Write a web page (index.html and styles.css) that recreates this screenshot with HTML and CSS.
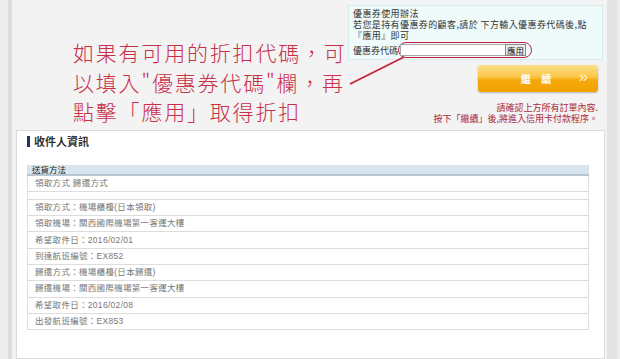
FILE: index.html
```html
<!DOCTYPE html>
<html lang="zh-Hant">
<head>
    <meta charset="UTF-8">
    <meta name="viewport" content="width=device-width, initial-scale=1.0">
    <title>收件人資訊</title>
    <link rel="stylesheet" href="styles.css">
</head>
<body>
    <div class="page">
        <div class="top">
            <div class="note-annotation">
                <div>如果有可用的折扣代碼，可</div>
                <div>以填入"優惠券代碼"欄，再</div>
                <div>點擊「應用」取得折扣</div>
            </div>

            <svg class="pointer-line" width="70" height="40" viewBox="0 0 70 40">
                <path d="M2 32 L56 5" stroke="#c4203c" stroke-width="1.6" fill="none"/>
            </svg>

            <div class="side">
                <div class="coupon-box">
                    <div>優惠券使用辦法</div>
                    <div>若您是持有優惠券的顧客,請於 下方輸入優惠券代碼後,點<br>『應用』即可</div>
                    <div class="coupon-row">
                        <span>優惠券代碼</span>
                        <span class="coupon-mark">
                            <input type="text" class="coupon-input">
                            <button class="coupon-apply">應用</button>
                        </span>
                    </div>
                </div>

                <button class="continue-button">
                    <span class="continue-label">繼 續</span>
                    <span class="continue-arrow">»</span>
                </button>

                <div class="confirm-note">
                    <div>請確認上方所有訂單內容.</div>
                    <div>按下「繼續」後,將進入信用卡付款程序。</div>
                </div>
            </div>
        </div>

        <div class="panel">
            <h2 class="panel-title">收件人資訊</h2>

            <table class="info-table">
                <tr><th>送貨方法</th></tr>
                <tr><td>領取方式 歸還方式</td></tr>
                <tr class="spacer-row"><td></td></tr>
                <tr><td>領取方式：機場櫃檯(日本領取)</td></tr>
                <tr><td>領取機場：關西國際機場第一客運大樓</td></tr>
                <tr><td>希望取件日：2016/02/01</td></tr>
                <tr><td>到達航班編號：EX852</td></tr>
                <tr><td>歸還方式：機場櫃檯(日本歸還)</td></tr>
                <tr><td>歸還機場：關西國際機場第一客運大樓</td></tr>
                <tr><td>希望取件日：2016/02/08</td></tr>
                <tr><td>出發航班編號：EX853</td></tr>
            </table>
        </div>
    </div>
</body>
</html>
```

FILE: styles.css
```css
body {
    margin: 0;
    background-color: #ececec;
    font-family: "Liberation Sans", "Noto Sans CJK TC", sans-serif;
}

.page {
    margin: 0 3px 0 8px;
    border-left: 4px solid #dddddd;
    border-right: 10px solid #e3e3e3;
    background-color: #f3f3f3;
    padding: 0 2px 4px 4px;
    height: 359px;
    box-sizing: border-box;
}

.top {
    position: relative;
    display: flex;
    padding-top: 5px;
}

.note-annotation {
    margin-left: 57px;
    padding-top: 33px;
    font-family: "Noto Sans CJK TC", sans-serif;
    font-weight: 300;
    font-size: 21px;
    line-height: 29.5px;
    letter-spacing: 1.8px;
    color: #c8304a;
    white-space: nowrap;
}

.pointer-line {
    position: absolute;
    left: 332px;
    top: 52px;
}

.side {
    margin-left: auto;
    margin-right: 2px;
    width: 255px;
    display: flex;
    flex-direction: column;
}

.coupon-box {
    background-color: #effbfb;
    border: 1px solid #d5ecec;
    padding: 2px 4px 1px 4px;
    font-family: "Noto Sans CJK TC", sans-serif;
    font-size: 9px;
    line-height: 11px;
    letter-spacing: 0.4px;
    color: #333;
    white-space: nowrap;
}

.coupon-row {
    display: flex;
    align-items: center;
    margin-top: 1px;
    letter-spacing: 0;
}

.coupon-mark {
    display: inline-flex;
    align-items: center;
    border: 1.5px solid #c4203c;
    border-radius: 9px;
    padding: 1px 5px 1px 1px;
}

.coupon-input {
    width: 105px;
    height: 12px;
    box-sizing: border-box;
    border: 1px solid #a9a9a9;
    border-right: none;
    margin: 0;
    padding: 0;
    background-color: #fff;
}

.coupon-apply {
    height: 12px;
    margin: 0;
    padding: 0 1px;
    border: 1px solid #8a8a8a;
    background-color: #ececec;
    font-family: "Noto Sans CJK TC", sans-serif;
    font-size: 8.5px;
    line-height: 9px;
    color: #222;
}

.continue-button {
    align-self: flex-end;
    position: relative;
    margin: 5px 5px 0 0;
    width: 120px;
    height: 27px;
    border: none;
    border-radius: 3px;
    background: linear-gradient(#fde08a 0%, #fbc545 45%, #f5a90e 55%, #f4a100 100%);
    box-shadow: 0 1px 2px rgba(0, 0, 0, 0.25);
    color: #fff;
    padding: 0;
}

.continue-label {
    font-family: "Noto Sans CJK TC", sans-serif;
    font-weight: bold;
    font-size: 10px;
    letter-spacing: 4px;
}

.continue-arrow {
    position: absolute;
    right: 10px;
    top: 3px;
    font-size: 16px;
    color: #fff3c8;
}

.confirm-note {
    margin: 10px 5px 0 0;
    text-align: right;
    font-family: "Noto Sans CJK TC", sans-serif;
    font-size: 9px;
    line-height: 11px;
    color: #a8283a;
    white-space: nowrap;
}

.panel {
    margin-top: 3px;
    background-color: #fff;
    border: 1px solid #dcdcdc;
    height: 229px;
    box-sizing: border-box;
    padding: 5px 15px 0 10px;
}

.panel-title {
    margin: 0;
    border-left: 3px solid #253066;
    padding-left: 4px;
    height: 11px;
    font-family: "Noto Sans CJK TC", sans-serif;
    font-size: 11px;
    line-height: 11px;
    font-weight: bold;
    color: #333;
}

.info-table {
    margin-top: 18px;
    width: 100%;
    border-collapse: collapse;
    border-left: 1px solid #dddddd;
    border-right: 1px solid #dddddd;
    font-family: "Liberation Sans", "Noto Sans CJK TC", sans-serif;
}

.info-table th {
    text-align: left;
    background-color: #d8e5ef;
    border-bottom: 2px solid #b7c6d2;
    height: 9px;
    padding: 0 0 0 4px;
    font-family: "Noto Sans CJK TC", sans-serif;
    font-size: 8.5px;
    line-height: 9px;
    font-weight: normal;
    color: #222;
}

.info-table td {
    border-bottom: 1px solid #dddddd;
    height: 15.3px;
    padding: 0 0 0 7px;
    font-size: 8.5px;
    line-height: 9px;
    letter-spacing: 0.3px;
    color: #777;
}

.info-table .spacer-row td {
    height: 7px;
}
```
